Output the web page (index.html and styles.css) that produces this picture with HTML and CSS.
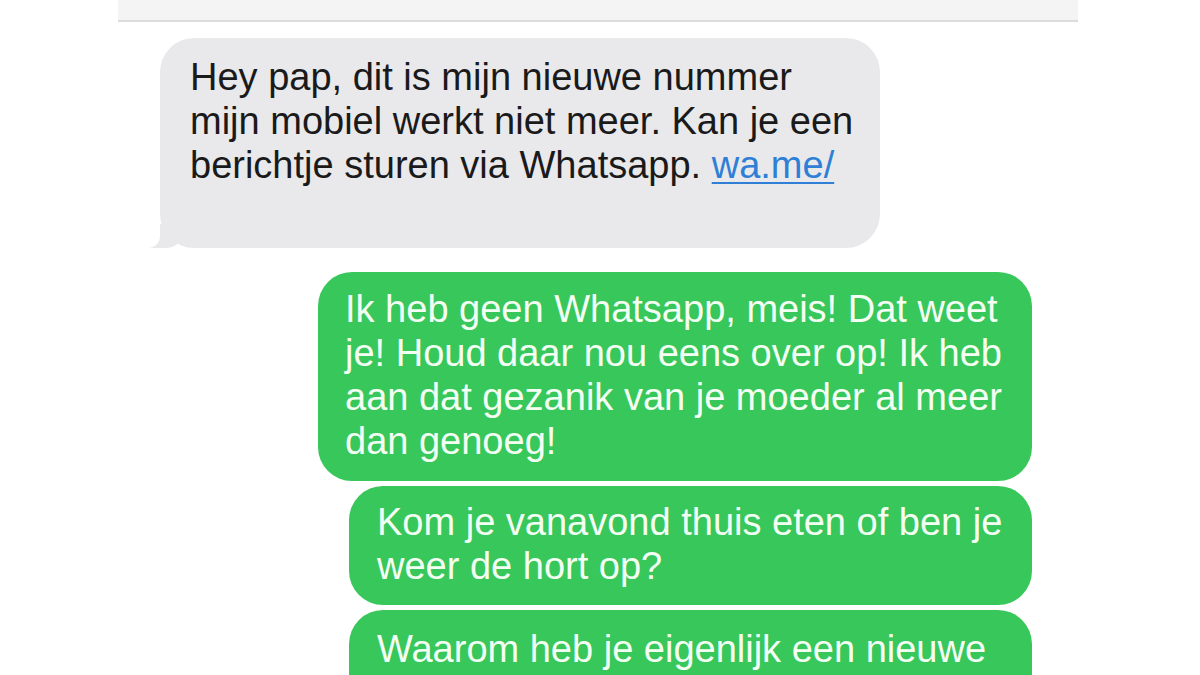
FILE: index.html
```html
<!DOCTYPE html>
<html lang="nl">
<head>
    <meta charset="UTF-8">
    <meta name="viewport" content="width=device-width, initial-scale=1.0">
    <title>Berichten</title>
    <link rel="stylesheet" href="styles.css">
</head>
<body>
<div class="screen">
    <div class="top-bar"></div>

    <div class="thread">
        <!-- incoming -->
        <div class="bubble bubble-in">
            Hey pap, dit is mijn nieuwe nummer<br>
            mijn mobiel werkt niet meer. Kan je een<br>
            berichtje sturen via Whatsapp. <a class="link" href="#">wa.me/</a>
        </div>

        <!-- outgoing -->
        <div class="group-out">
            <div class="bubble bubble-out bubble-first">
                Ik heb geen Whatsapp, meis! Dat weet<br>
                je! Houd daar nou eens over op! Ik heb<br>
                aan dat gezanik van je moeder al meer<br>
                dan genoeg!
            </div>
            <div class="bubble bubble-out bubble-next">
                Kom je vanavond thuis eten of ben je<br>
                weer de hort op?
            </div>
            <div class="bubble bubble-out bubble-next bubble-last">
                Waarom heb je eigenlijk een nieuwe
            </div>
        </div>
    </div>
</div>
</body>
</html>
```
FILE: styles.css
```css
html, body {
    margin: 0;
    height: 100%;
    overflow: hidden;
    background: #ffffff;
}

body {
    font-family: "Liberation Sans", Arial, sans-serif;
}

.screen {
    width: 960px;
    margin: 0 auto 0 118px;
}

.top-bar {
    height: 20px;
    background: #f4f4f4;
    border-bottom: 2px solid #dcdcdc;
}

.thread {
    display: flex;
    flex-direction: column;
    padding: 16px 46px 0 32px;
}

.bubble {
    box-sizing: border-box;
    font-size: 38px;
    line-height: 44px;
    border-radius: 34px;
    white-space: nowrap;
}

.bubble-in {
    position: relative;
    align-self: flex-start;
    width: 720px;
    margin-left: 10px;
    padding: 17px 30px 61px 30px;
    background: #e9e9eb;
    color: #1a1a1a;
}

/* little tail bottom-left */
.bubble-in::before {
    content: "";
    position: absolute;
    left: -10px;
    bottom: 0;
    width: 32px;
    height: 24px;
    background: #e9e9eb;
    border-bottom-right-radius: 16px 14px;
}

.bubble-in::after {
    content: "";
    position: absolute;
    left: -24px;
    bottom: 0;
    width: 24px;
    height: 24px;
    background: #ffffff;
    border-bottom-right-radius: 12px;
}

.link {
    color: #2f7fd6;
    text-decoration: underline;
    text-decoration-thickness: 2px;
    text-underline-offset: 4px;
}

.group-out {
    display: flex;
    flex-direction: column;
    align-items: flex-end;
    gap: 5px;
    margin-top: 24px;
}

.bubble-out {
    background: #38c75b;
    color: #f4fff4;
}

.bubble-first {
    width: 714px;
    padding: 15px 27px 18px 27px;
}

.bubble-next {
    width: 683px;
    padding: 14px 28px 17px 28px;
}

.bubble-last {
    padding-top: 17px;
    padding-bottom: 60px;
}
```
